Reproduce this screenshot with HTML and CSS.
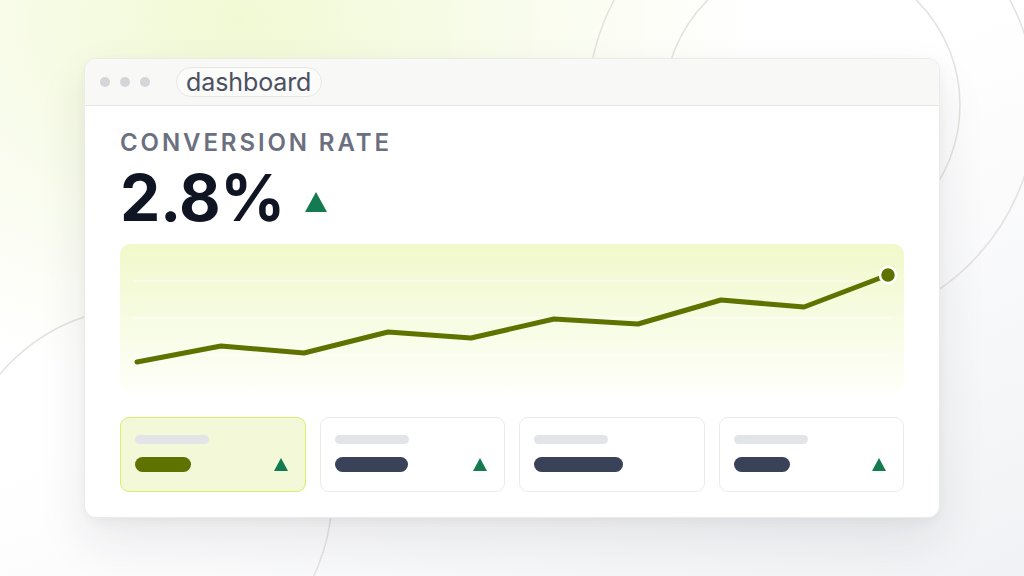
FILE: index.html
```html
<!DOCTYPE html>
<html lang="en">
<head>
<meta charset="utf-8">
<title>Dashboard</title>
<link rel="stylesheet" href="styles.css">
</head>
<body>
<svg class="bg-rings" width="1024" height="576" viewBox="0 0 1024 576" aria-hidden="true">
  <circle cx="812" cy="105" r="148" />
  <circle cx="812" cy="105" r="224" />
  <circle cx="144" cy="495" r="188" />
</svg>
<main class="window">
  <header class="titlebar">
    <span class="dots"><i></i><i></i><i></i></span>
    <span class="url">dashboard</span>
  </header>
  <section class="content">
    <div class="label">CONVERSION RATE</div>
    <div class="value-row">
      <span class="value">2.8%</span>
      <span class="tri tri-lg"></span>
    </div>
    <div class="chart">
      <svg width="786" height="148" viewBox="0 0 786 148">
        <line class="grid" x1="13" y1="37" x2="771" y2="37"/>
        <line class="grid" x1="13" y1="74" x2="771" y2="74"/>
        <line class="grid" x1="13" y1="111" x2="771" y2="111"/>
        <polyline class="trend" points="17,118 101,102 184,109 268,88 351,94 434,75 518,80 601,56 684,63 768,31"/>
        <circle class="end" cx="768" cy="31" r="8"/>
      </svg>
    </div>
    <div class="cards">
      <div class="card card-active">
        <div class="bars"><span class="bar-light"></span><span class="bar-dark" style="width:56px"></span></div>
        <span class="tri tri-sm"></span>
      </div>
      <div class="card">
        <div class="bars"><span class="bar-light"></span><span class="bar-dark" style="width:73px"></span></div>
        <span class="tri tri-sm"></span>
      </div>
      <div class="card">
        <div class="bars"><span class="bar-light"></span><span class="bar-dark" style="width:89px"></span></div>
      </div>
      <div class="card">
        <div class="bars"><span class="bar-light"></span><span class="bar-dark" style="width:56px"></span></div>
        <span class="tri tri-sm"></span>
      </div>
    </div>
  </section>
</main>
</body>
</html>
```
FILE: styles.css
```css
* { box-sizing: border-box; }
html, body { margin: 0; height: 100%; }
body {
  width: 1024px;
  height: 576px;
  overflow: hidden;
  position: relative;
  font-family: Inter, "Liberation Sans", sans-serif;
  background:
    radial-gradient(ellipse 640px 460px at 240px 20px, #f1f9d4 0%, rgba(246,251,228,0.65) 45%, rgba(255,255,255,0) 80%),
    linear-gradient(155deg, #ffffff 45%, #f1f2f5 100%);
  display: flex;
  align-items: center;
  justify-content: center;
}
.bg-rings {
  position: absolute;
  left: 0;
  top: 0;
  fill: none;
  stroke: #e2e2e0;
  stroke-width: 1.5;
}
.window {
  position: relative;
  width: 856px;
  height: 460px;
  background: #fff;
  border: 1px solid #ebebe8;
  border-radius: 12px;
  box-shadow: 0 22px 50px rgba(30, 35, 45, 0.09), 0 4px 12px rgba(30, 35, 45, 0.04);
  overflow: hidden;
}
.titlebar {
  height: 47px;
  background: #f8f8f6;
  border-bottom: 1px solid #e7e7e3;
  display: flex;
  align-items: center;
  padding-left: 15px;
}
.dots { display: flex; gap: 10px; }
.dots i {
  width: 10px;
  height: 10px;
  border-radius: 50%;
  background: #d5d5d9;
}
.url {
  margin-left: 26px;
  height: 30px;
  padding: 0 10px 0 9px;
  border: 1px solid #e6e6e3;
  border-radius: 15px;
  background: #fbfbfa;
  display: flex;
  align-items: center;
  font-size: 25px;
  color: #4b5061;
  letter-spacing: -0.1px;
}
.content { padding: 22px 35px 0 35px; }
.label {
  font-size: 24px;
  line-height: 29px;
  font-weight: 600;
  letter-spacing: 2.9px;
  color: #6b7080;
}
.value-row {
  display: flex;
  align-items: center;
  margin-top: 9px;
  height: 64px;
}
.value {
  font-size: 64px;
  line-height: 64px;
  font-weight: 700;
  letter-spacing: -0.4px;
  color: #0f1523;
}
.tri {
  width: 0;
  height: 0;
  border-style: solid;
  border-color: transparent transparent #147a50 transparent;
}
.tri-lg {
  margin-left: 20px;
  margin-top: 7px;
  border-width: 0 11.5px 20px 11.5px;
}
.chart {
  margin-top: 14px;
  height: 148px;
  border-radius: 10px;
  background: linear-gradient(180deg, #f1f9cb 0%, #f7fce4 55%, #fefff9 100%);
}
.chart svg { display: block; }
.grid { stroke: #ffffff; stroke-width: 1.2; opacity: 0.9; }
.trend {
  fill: none;
  stroke: #5e7200;
  stroke-width: 5;
  stroke-linejoin: round;
  stroke-linecap: round;
}
.end { fill: #5e7200; stroke: #ffffff; stroke-width: 2.5; }
.cards {
  margin-top: 25px;
  display: grid;
  grid-template-columns: repeat(4, 1fr);
  gap: 14px;
}
.card {
  height: 75px;
  border: 1.5px solid #ebebe7;
  border-radius: 9px;
  background: #fff;
  display: flex;
  align-items: flex-end;
  justify-content: space-between;
  padding: 0 17px 19px 14px;
}
.card-active {
  background: #f2f8d8;
  border-color: #d9ee6c;
}
.bars { display: flex; flex-direction: column; gap: 13px; }
.bar-light {
  display: block;
  width: 74px;
  height: 9px;
  border-radius: 5px;
  background: #e3e4e8;
}
.bar-dark {
  display: block;
  height: 15px;
  border-radius: 8px;
  background: #3a4259;
}
.card-active .bar-dark { background: #5e7200; }
.tri-sm {
  border-width: 0 7.5px 13px 7.5px;
  margin-bottom: 1px;
}
```
